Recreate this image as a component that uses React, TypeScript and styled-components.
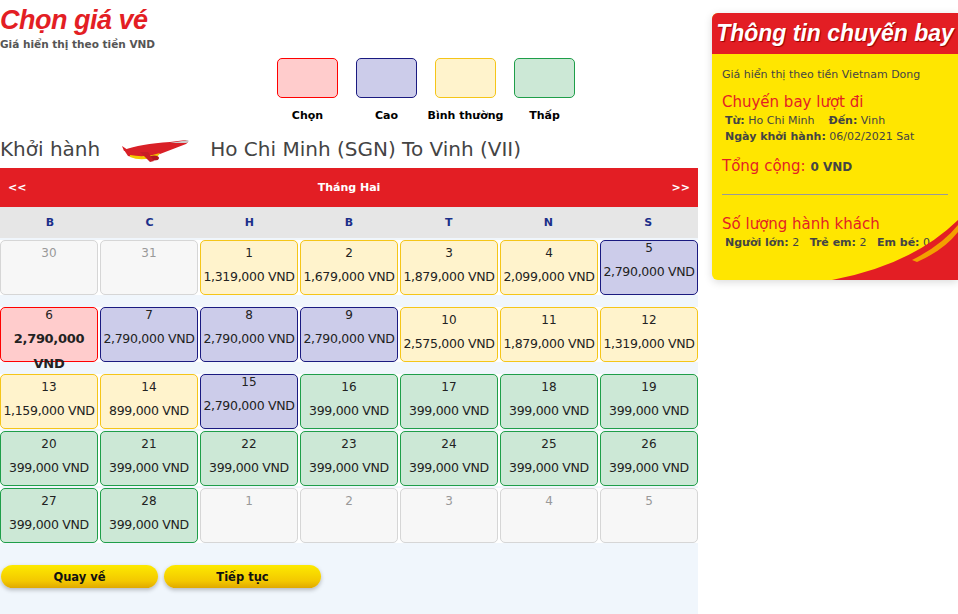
import React from "react";
import styled, { createGlobalStyle } from "styled-components";

const G = createGlobalStyle`
  body { margin: 0; background: #fff; font-family: "DejaVu Sans", Verdana, sans-serif; }
`;
const Page = styled.div`display: flex; width: 958px; height: 614px; overflow: hidden;`;
const Main = styled.div`width: 698px; display: flex; flex-direction: column;`;
const Title = styled.h1`margin: 4px 0 0; font: italic bold 27px "Liberation Sans", sans-serif; color: #e31e24; letter-spacing: -0.5px; line-height: 32px;`;
const Sub = styled.div`font-size: 10.5px; font-weight: bold; color: #555; margin-top: 2px;`;
const Legend = styled.div`display: flex; gap: 18px; margin: 8px 0 0 277px;`;
const LegItem = styled.div`display: flex; flex-direction: column; align-items: center; width: 61px;`;
const LegBox = styled.div<{ bg: string; bd: string }>`width: 61px; height: 40px; border-radius: 5px; background: ${p => p.bg}; border: 1px solid ${p => p.bd}; box-sizing: border-box;`;
const LegLabel = styled.div`margin-top: 11px; font-size: 11px; font-weight: bold; white-space: nowrap;`;
const Route = styled.div`display: flex; align-items: center; height: 38px; margin-top: 8px; font-size: 20px; color: #444;`;
const Cal = styled.div`background: #f0f6fc; flex: 1; display: flex; flex-direction: column;`;
const Head = styled.div`background: #e31e24; color: #fff; height: 39px; display: flex; align-items: center; justify-content: space-between; padding: 0 8px; font-size: 11px; font-weight: bold;`;
const Days = styled.div`display: grid; grid-template-columns: repeat(7, 1fr); background: #e8e8e8; height: 31px; align-items: center; text-align: center; font-size: 11px; font-weight: bold; color: #1b2f8a; background: #e6e6e6;`;
const Row = styled.div<{ mb: number }>`display: grid; grid-template-columns: repeat(7, 98px); gap: 2px; margin-top: 2px; margin-bottom: ${p => p.mb}px; background: #fff;`;
const kinds: Record<string, [string, string]> = {
  o: ["#f7f7f7", "#d6d6d6"], n: ["#fff3cc", "#f5c518"], h: ["#ccccea", "#1a1a80"],
  l: ["#cce8d6", "#1e9e49"], s: ["#ffcccc", "#ff0000"],
};
const Cell = styled.div<{ k: string }>`height: 55px; box-sizing: border-box; border-radius: 5px; border: 1px solid ${p => kinds[p.k][1]}; background: ${p => kinds[p.k][0]}; text-align: center; font-size: 12px; color: ${p => (p.k === "o" ? "#999" : "#222")}; padding-top: ${p => (p.k === "s" || p.k === "h" || p.k === "n" && false ? 0 : 5)}px; line-height: 14px; overflow: visible;`;
const Price = styled.div<{ k: string }>`margin-top: ${p => (p.k === "s" ? 4 : 10)}px; font-size: 12.5px; white-space: nowrap; letter-spacing: -0.3px; ${p => p.k === "s" && "font-weight: bold; line-height: 25px; font-size: 13px;"}`;
const Buttons = styled.div`display: flex; gap: 6px; padding: 22px 0 0 1px;`;
const Btn = styled.button`width: 157px; height: 23px; border: none; border-radius: 12px; background: linear-gradient(#fdea00, #f3c800 70%, #e0a900); box-shadow: 0 2px 4px rgba(0,0,0,.25); font: bold 11.5px "DejaVu Sans", sans-serif; color: #111;`;
const Side = styled.div`margin: 13px 0 0 14px; width: 246px; height: 267px; border-radius: 6px 0 0 6px; background: #ffe600; position: relative; overflow: hidden; box-shadow: 0 2px 8px rgba(0,0,0,.15);`;
const SideHead = styled.div`background: #e31e24; color: #fff; height: 41px; display: flex; align-items: center; justify-content: center; font: italic bold 23px "Liberation Sans", sans-serif; text-shadow: 1px 1px 1px #900;`;
const SideBody = styled.div`padding: 14px 10px; font-size: 11px; color: #444; position: relative;`;
const Red = styled.div<{ mt: number }>`color: #e31e24; font-size: 15px; margin-top: ${p => p.mt}px;`;
const Line = styled.div`padding-left: 3px; margin-top: 3px;`;
const Hr = styled.div`border-top: 1px solid #999; margin: 19px 0 0;`;

const data: [string, string, string?][][] = [
  [["30","o"],["31","o"],["1","n","1,319,000 VND"],["2","n","1,679,000 VND"],["3","n","1,879,000 VND"],["4","n","2,099,000 VND"],["5","h","2,790,000 VND"]],
  [["6","s","2,790,000 VND"],["7","h","2,790,000 VND"],["8","h","2,790,000 VND"],["9","h","2,790,000 VND"],["10","n","2,575,000 VND"],["11","n","1,879,000 VND"],["12","n","1,319,000 VND"]],
  [["13","n","1,159,000 VND"],["14","n","899,000 VND"],["15","h","2,790,000 VND"],["16","l","399,000 VND"],["17","l","399,000 VND"],["18","l","399,000 VND"],["19","l","399,000 VND"]],
  [["20","l","399,000 VND"],["21","l","399,000 VND"],["22","l","399,000 VND"],["23","l","399,000 VND"],["24","l","399,000 VND"],["25","l","399,000 VND"],["26","l","399,000 VND"]],
  [["27","l","399,000 VND"],["28","l","399,000 VND"],["1","o"],["2","o"],["3","o"],["4","o"],["5","o"]],
];
const mbs = [10, 10, 0, 0, 0];

const Plane = () => (
  <svg width="72" height="30" viewBox="0 0 72 30" style={{ margin: "0 18px 0 20px" }}>
    <path d="M4 16 Q20 10 50 8 L66 6 Q70 7 66 10 L40 20 Q20 26 8 22 Z" fill="#d92027" />
    <path d="M10 21 Q26 24 40 19 L38 22 Q22 28 10 23Z" fill="#f3c800" />
    <path d="M2 12 L8 16 L4 17Z" fill="#d92027" />
    <path d="M50 9 L68 6 Q70 8 66 9Z" fill="#ccc" />
    <ellipse cx="34" cy="24" rx="5" ry="2.5" fill="#b01820" />
    <path d="M20 18 L30 28 L34 27 L28 18Z" fill="#c81d25" />
  </svg>
);

export default function App() {
  return (
    <Page>
      <G />
      <Main>
        <Title>Chọn giá vé</Title>
        <Sub>Giá hiển thị theo tiền VND</Sub>
        <Legend>
          {[["Chọn","#ffcccc","#ff0000"],["Cao","#ccccea","#1a1a80"],["Bình thường","#fff3cc","#f5c518"],["Thấp","#cce8d6","#1e9e49"]].map(([l,b,d]) => (
            <LegItem key={l}><LegBox bg={b} bd={d} /><LegLabel>{l}</LegLabel></LegItem>
          ))}
        </Legend>
        <Route>Khởi hành<Plane />Ho Chi Minh (SGN) To Vinh (VII)</Route>
        <Cal>
          <Head><span>&lt;&lt;</span><span>Tháng Hai</span><span>&gt;&gt;</span></Head>
          <Days>{["B","C","H","B","T","N","S"].map((d,i)=><span key={i}>{d}</span>)}</Days>
          {data.map((r, i) => (
            <Row key={i} mb={mbs[i]}>
              {r.map(([d,k,p], j) => (
                <Cell k={k} key={j} style={k === "h" && i === 1 || k === "s" ? { paddingTop: 0 } : undefined}>
                  {d}{p && <Price k={k}>{k === "s" ? <>2,790,000<br/>VND</> : p}</Price>}
                </Cell>
              ))}
            </Row>
          ))}
          <Buttons><Btn>Quay về</Btn><Btn>Tiếp tục</Btn></Buttons>
        </Cal>
      </Main>
      <Side>
        <SideHead>Thông tin chuyến bay</SideHead>
        <SideBody>
          <div>Giá hiển thị theo tiền Vietnam Dong</div>
          <Red mt={12}>Chuyến bay lượt đi</Red>
          <Line><b>Từ:</b> Ho Chi Minh &nbsp;&nbsp; <b>Đến:</b> Vinh</Line>
          <Line><b>Ngày khởi hành:</b> 06/02/2021 Sat</Line>
          <Red mt={14}>Tổng cộng: <b style={{ color: "#444", fontSize: 12 }}>0 VND</b></Red>
          <Hr />
          <Red mt={20}>Số lượng hành khách</Red>
          <Line><b>Người lớn:</b> 2 &nbsp; <b>Trẻ em:</b> 2 &nbsp; <b>Em bé:</b> 0</Line>
        </SideBody>
        <svg width="246" height="60" viewBox="0 0 246 60" style={{ position: "absolute", bottom: 0, left: 0 }}>
          <path d="M120 60 Q200 45 246 0 L246 60Z" fill="#e31e24" />
          <path d="M200 40 Q230 25 246 5 L246 12 Q232 30 205 42Z" fill="#f3a000" />
        </svg>
      </Side>
    </Page>
  );
}
